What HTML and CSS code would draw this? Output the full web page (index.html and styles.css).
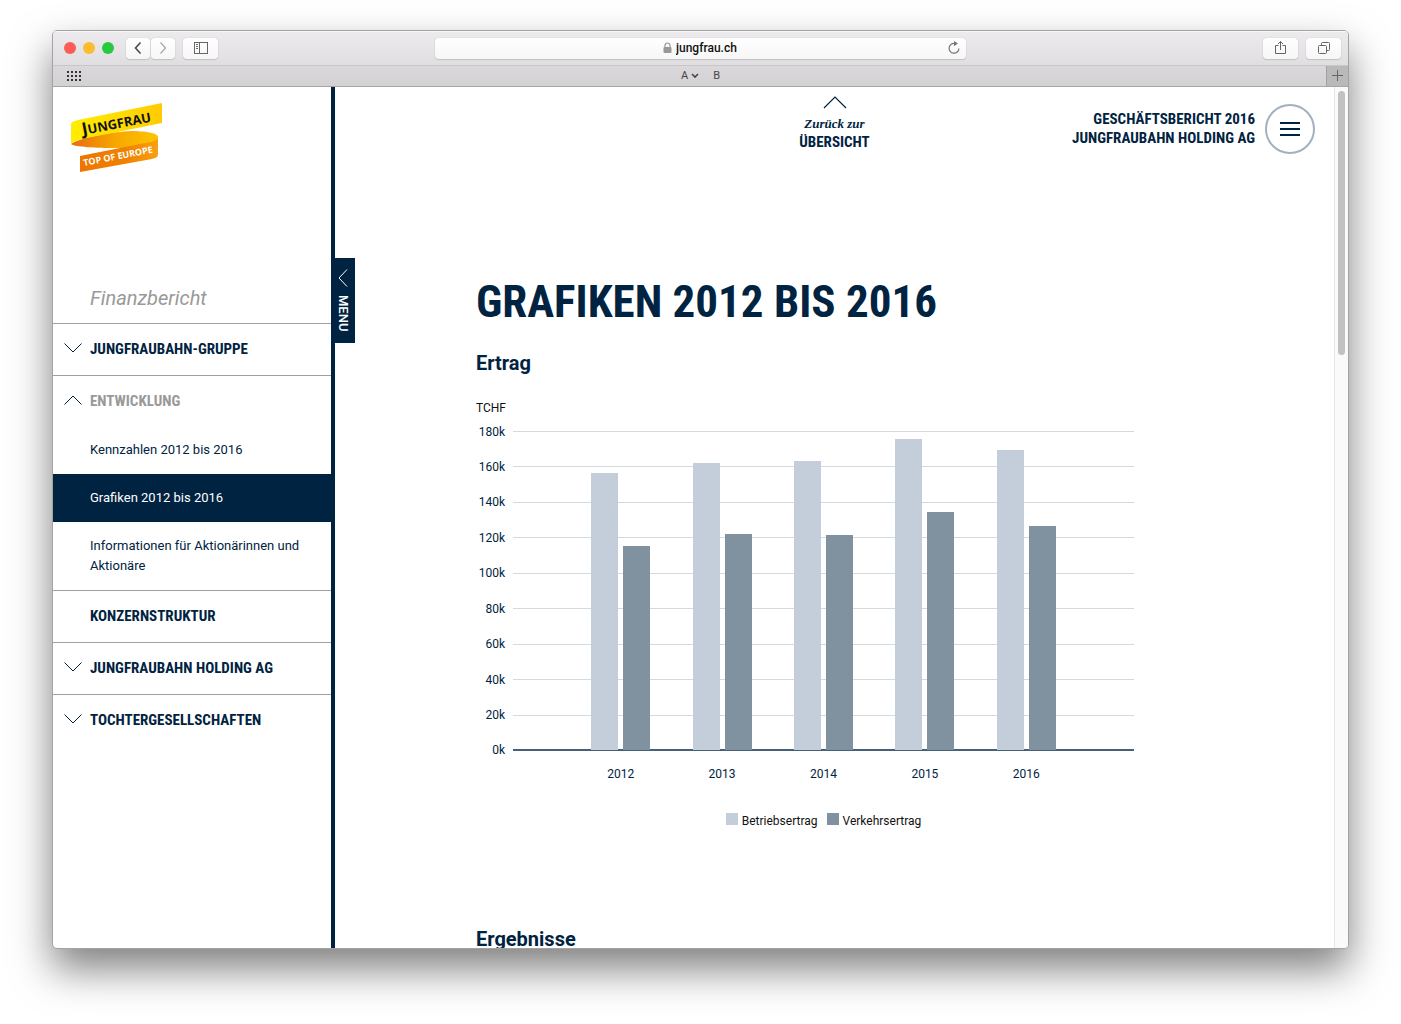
FILE: index.html
```html
<!DOCTYPE html>
<html lang="de">
<head>
<meta charset="utf-8">
<meta name="viewport" content="width=device-width, initial-scale=1">
<title>Grafiken 2012 bis 2016 – Jungfraubahn Holding AG</title>
<link rel="stylesheet" href="styles.css">
</head>
<body>
<div class="window">
  <div class="toolbar">
    <div class="toolbar-side">
      <div class="lights"><span class="light light-red"></span><span class="light light-yellow"></span><span class="light light-green"></span></div>
      <div class="history">
        <button class="tool tool-narrow" aria-label="Zurück"><svg width="12" height="16" viewBox="0 0 12 16"><path d="M8.500 2.500L3.500 8l5 5.500" stroke="#444" stroke-width="1.500"/></svg></button>
        <button class="tool tool-narrow" aria-label="Vor"><svg width="12" height="16" viewBox="0 0 12 16"><path d="M3.500 2.500L8.500 8l-5 5.500" stroke="#aaa" stroke-width="1.300"/></svg></button>
      </div>
      <button class="tool" aria-label="Seitenleiste"><svg width="16" height="14" viewBox="0 0 16 14"><rect x="1.500" y="1.500" width="13" height="11" stroke="#666"/><path d="M6.500 1.500v11M3 3.500h2M3 5.500h2M3 7.500h2" stroke="#666"/></svg></button>
    </div>
    <div class="address">
      <div class="address-text">
        <svg width="9" height="12" viewBox="0 0 9 12"><rect x="0.500" y="5" width="8" height="6" rx="1" fill="#999"/><path d="M2 5.500V3.500a2.500 2.500 0 0 1 5 0v2" stroke="#999" stroke-width="1.200"/></svg>
        <input class="address-input" type="text" value="jungfrau.ch" aria-label="Adresse">
      </div>
      <button class="reload" aria-label="Neu laden"><svg width="14" height="14" viewBox="0 0 14 14"><path d="M8 2.500A4.900 4.900 0 1 0 11.900 7.500" stroke="#777" stroke-width="1.200"/><path d="M7 0l4 2.600-4 2.600z" fill="#777"/></svg></button>
    </div>
    <div class="toolbar-side toolbar-end">
      <button class="tool" aria-label="Teilen"><svg width="14" height="16" viewBox="0 0 14 16"><path d="M4.500 5.500h-3v8h10v-8h-3M6.500 10V1.500M4 4l2.500-2.500L9 4" stroke="#666"/></svg></button>
      <button class="tool" aria-label="Alle Tabs"><svg width="14" height="14" viewBox="0 0 14 14"><rect x="1.500" y="4.500" width="8" height="8" rx="1" stroke="#666"/><path d="M4.500 4V2.500a1 1 0 0 1 1-1h6a1 1 0 0 1 1 1v6a1 1 0 0 1-1 1H10" stroke="#666"/></svg></button>
    </div>
  </div>
  <div class="favorites">
    <button class="bare" aria-label="Favoriten"><svg width="14" height="10" viewBox="0 0 14 10"><path d="M0 1h14M0 5h14M0 9h14" stroke="#333" stroke-width="2" stroke-dasharray="2 2"/></svg></button>
    <div class="bookmarks">
      <button class="bare">A <svg width="8" height="6" viewBox="0 0 8 6"><path d="M1 1l3 3 3-3" stroke="#444" stroke-width="1.600"/></svg></button>
      <button class="bare">B</button>
    </div>
    <button class="new-tab" aria-label="Neuer Tab"><svg width="12" height="12" viewBox="0 0 12 12"><path d="M5.500 0v11M0 5.500h11" stroke="#666"/></svg></button>
  </div>

  <div class="page">
    <aside class="sidebar">
      <a class="logo" href="#" aria-label="Jungfrau – Top of Europe">
        <svg width="92" height="70" viewBox="0 0 92 70">
          <defs>
            <linearGradient id="yellow"><stop offset="0" stop-color="#ffee00"/><stop offset="1" stop-color="#ffcb05"/></linearGradient>
            <linearGradient id="fold"><stop offset="0" stop-color="#e96b10"/><stop offset="0.500" stop-color="#f7a600"/><stop offset="1" stop-color="#ffc400"/></linearGradient>
            <linearGradient id="orange"><stop offset="0" stop-color="#ee7500"/><stop offset="0.600" stop-color="#f08200"/><stop offset="1" stop-color="#f9a010"/></linearGradient>
          </defs>
          <path d="M0 41C12 33 44 29 60 28c14 0 27 2 27 6 0 7-18 11-42 11C26 45 3 44 0 41z" fill="url(#fold)"/>
          <path d="M0 41V22c0-3 3-4 7-5L91 0v20L26 33C10 36 2 38 0 41z" fill="url(#yellow)"/>
          <path d="M9 53l60-12c12-2 18-3 18-7v17c0 3-2 4-6 5L9 69z" fill="url(#orange)"/>
          <text class="logo-name" transform="translate(12 32) rotate(-11)"><tspan class="logo-initial">J</tspan>UNGFRAU</text>
          <text class="logo-claim" transform="translate(13 63) rotate(-11)">TOP OF EUROPE</text>
        </svg>
      </a>
      <p class="section-name">Finanzbericht</p>
      <nav class="nav">
        <ul class="nav-list">
          <li class="nav-item"><a class="nav-link" href="#"><svg class="caret" width="18" height="10" viewBox="0 0 18 10"><path d="M0.500 0.500L9 9l8.500-8.500"/></svg>Jungfraubahn-Gruppe</a></li>
          <li class="nav-item"><a class="nav-link nav-open" href="#"><svg class="caret" width="18" height="10" viewBox="0 0 18 10"><path d="M0.500 9.500L9 1l8.500 8.500"/></svg>Entwicklung</a>
            <ul class="nav-sub">
              <li><a class="sub-link" href="#">Kennzahlen 2012 bis 2016</a></li>
              <li><a class="sub-link sub-current" href="#" aria-current="page">Grafiken 2012 bis 2016</a></li>
              <li><a class="sub-link" href="#">Informationen für Aktionärinnen und Aktionäre</a></li>
            </ul>
          </li>
          <li class="nav-item"><a class="nav-link" href="#">Konzernstruktur</a></li>
          <li class="nav-item"><a class="nav-link" href="#"><svg class="caret" width="18" height="10" viewBox="0 0 18 10"><path d="M0.500 0.500L9 9l8.500-8.500"/></svg>Jungfraubahn Holding AG</a></li>
          <li class="nav-item"><a class="nav-link" href="#"><svg class="caret" width="18" height="10" viewBox="0 0 18 10"><path d="M0.500 0.500L9 9l8.500-8.500"/></svg>Tochtergesellschaften</a></li>
        </ul>
      </nav>
      <button class="menu-tab"><svg width="10" height="18" viewBox="0 0 10 18"><path d="M9 0.500L1 9l8 8.500" stroke="#fff"/></svg>MENU</button>
    </aside>

    <main class="main">
      <header class="header">
        <a class="back" href="#"><svg width="24" height="13" viewBox="0 0 24 13"><path d="M1 12L12 1l11 11" stroke="#002341" stroke-width="1.200"/></svg><span class="back-small">Zurück zur</span><span>Übersicht</span></a>
        <div class="report">
          <p class="report-title">Geschäftsbericht 2016<br>Jungfraubahn Holding AG</p>
          <button class="burger" aria-label="Menü"><svg width="20" height="16" viewBox="0 0 20 16"><path d="M0 2h20M0 8h20M0 14h20" stroke="#002341" stroke-width="2"/></svg></button>
        </div>
      </header>
      <article class="content">
        <h1 class="title">Grafiken 2012 bis 2016</h1>
        <h2 class="subtitle">Ertrag</h2>
        <figure class="chart">
          <p class="unit">TCHF</p>
          <div class="plot">
            <ul class="scale">
              <li class="tick">180k</li><li class="tick">160k</li><li class="tick">140k</li><li class="tick">120k</li><li class="tick">100k</li><li class="tick">80k</li><li class="tick">60k</li><li class="tick">40k</li><li class="tick">20k</li><li class="tick tick-zero">0k</li>
            </ul>
            <div class="bars">
              <div class="pair"><span class="bar" style="height:86.900%"></span><span class="bar bar-dark" style="height:63.900%"></span></div>
              <div class="pair"><span class="bar" style="height:89.900%"></span><span class="bar bar-dark" style="height:67.700%"></span></div>
              <div class="pair"><span class="bar" style="height:90.500%"></span><span class="bar bar-dark" style="height:67.500%"></span></div>
              <div class="pair"><span class="bar" style="height:97.500%"></span><span class="bar bar-dark" style="height:74.500%"></span></div>
              <div class="pair"><span class="bar" style="height:94%"></span><span class="bar bar-dark" style="height:70.200%"></span></div>
            </div>
          </div>
          <div class="years"><span>2012</span><span>2013</span><span>2014</span><span>2015</span><span>2016</span></div>
          <figcaption class="legend"><span class="key">Betriebsertrag</span><span class="key key-dark">Verkehrsertrag</span></figcaption>
        </figure>
        <h2 class="subtitle">Ergebnisse</h2>
      </article>
    </main>
    <div class="scrollbar"><div class="thumb"></div></div>
  </div>
</div>
</body>
</html>
```
FILE: styles.css
```css
* { box-sizing: border-box; }

:root {
  --navy: #002341;
  --line: #a0a0a0;
  --condensed: "Roboto Condensed", "Liberation Sans Narrow", Roboto, sans-serif;
}

body {
  margin: 0;
  padding: 30px 52px 75px;
  height: 100vh;
  overflow: hidden;
  background: #fff;
  color: var(--navy);
  font: 13px/20px Roboto, sans-serif;
}

ul { list-style: none; margin: 0; padding: 0; }
p, h1, h2, figure { margin: 0; }
a { color: inherit; text-decoration: none; }
button { border: 0; padding: 0; margin: 0; font: inherit; color: inherit; }
svg { display: block; fill: none; flex: none; }

/* Browser window */
.window {
  display: flex;
  flex-direction: column;
  height: 100%;
  border: 1px solid #a3a3a3;
  border-radius: 5px;
  background: #fff;
  overflow: hidden;
  box-shadow: 0 20px 40px rgba(0, 0, 0, 0.5);
}

.toolbar {
  display: grid;
  grid-template-columns: 1fr 41% 1fr;
  align-items: center;
  height: 34px;
  flex: none;
  background: linear-gradient(#edebed, #e0dee0);
  box-shadow: inset 0 1px #f8f8f8;
}
.toolbar-side { display: flex; align-items: center; gap: 8px; padding: 0 7px 0 11px; }
.toolbar-end { justify-content: flex-end; }
.lights { display: flex; gap: 7px; margin-right: 4px; }
.light { width: 12px; height: 12px; border-radius: 50%; }
.light-red { background: #fc5b57; }
.light-yellow { background: #fdbc2e; }
.light-green { background: #28c93f; }
.history { display: flex; gap: 1px; }
.tool {
  display: flex;
  align-items: center;
  justify-content: center;
  width: 35px;
  height: 21px;
  border-radius: 4px;
  background: linear-gradient(#fff, #f6f6f6);
  box-shadow: 0 0 1px #aaa, 0 1px 1px #c4c4c4;
}
.tool-narrow { width: 24px; }

.address {
  display: grid;
  grid-template-columns: 1fr auto 1fr;
  align-items: center;
  height: 21px;
  padding: 0 5px;
  border-radius: 4px;
  background: linear-gradient(#fff, #f6f6f6);
  box-shadow: 0 0 1px #aaa, 0 1px 1px #c4c4c4;
}
.address-text { grid-column: 2; display: flex; align-items: center; gap: 4px; }
.address-input {
  width: 62px;
  height: 20px;
  padding: 0;
  border: 0;
  background: none;
  color: #111;
  font: 500 12px/20px Roboto, sans-serif;
}
.reload { justify-self: end; background: none; }

.favorites {
  display: grid;
  grid-template-columns: 1fr auto 1fr;
  align-items: center;
  height: 22px;
  flex: none;
  border-top: 1px solid #c8c6c8;
  border-bottom: 1px solid #a5a5a5;
  background: linear-gradient(#dad8da, #d3d1d3);
  color: #444;
}
.favorites > .bare { padding-left: 14px; }
.bare { display: flex; align-items: center; gap: 3px; background: none; font-size: 11px; }
.bookmarks { display: flex; gap: 14px; }
.new-tab {
  display: flex;
  align-items: center;
  justify-content: center;
  justify-self: end;
  width: 22px;
  height: 20px;
  background: #b9b9b9;
  border-left: 1px solid #a2a2a2;
}

/* Page */
.page { display: flex; flex: 1; min-height: 0; }

.sidebar {
  position: relative;
  width: 282px;
  flex: none;
  border-right: 4px solid var(--navy);
}
.logo { display: block; padding: 16px 18px 0; }
.logo-name { font: 700 13px "Open Sans", sans-serif; fill: #111; }
.logo-initial { font-size: 17px; }
.logo-claim { font: 700 9px "Open Sans", sans-serif; fill: #fff; }
.section-name {
  padding: 112px 37px 12px;
  color: #999;
  font: italic 400 20px/26px Roboto, sans-serif;
}
.nav-item { border-top: 1px solid var(--line); }
.nav-link {
  display: block;
  position: relative;
  padding: 15px 37px 16px;
  font: 700 15px/20px var(--condensed);
  text-transform: uppercase;
}
.nav-open { padding-bottom: 15px; color: #999; }
.caret { position: absolute; left: 11px; top: 19px; stroke: var(--navy); }
.sub-link { display: block; padding: 14px 24px 14px 37px; }
.sub-current { background: var(--navy); color: #fff; }

.menu-tab {
  position: absolute;
  top: 171px;
  left: 100%;
  display: flex;
  align-items: center;
  justify-content: center;
  gap: 8px;
  height: 85px;
  width: 24px;
  background: var(--navy);
  color: #fff;
  font: 500 13px/16px Roboto, sans-serif;
  writing-mode: vertical-rl;
}

.main { flex: 1; min-width: 0; overflow: hidden; }
.header {
  display: grid;
  grid-template-columns: 1fr auto 1fr;
  align-items: start;
  padding: 9px 19px 0;
  text-transform: uppercase;
  font: 700 15px/19px var(--condensed);
}
.back {
  grid-column: 2;
  display: flex;
  flex-direction: column;
  align-items: center;
  line-height: 18px;
}
.back-small {
  margin-top: 6px;
  text-transform: none;
  font: italic 700 13px/18px "Liberation Serif", serif;
}
.report {
  display: flex;
  align-items: center;
  justify-content: flex-end;
  gap: 10px;
  padding-top: 8px;
  text-align: right;
}
.burger {
  display: flex;
  align-items: center;
  justify-content: center;
  width: 50px;
  height: 50px;
  border: 2px solid #a3b0bf;
  border-radius: 50%;
  background: #fff;
}

.content { padding: 118px 200px 0 141px; }
.title { font: 700 45px/60px var(--condensed); text-transform: uppercase; }
.subtitle { margin-top: 18px; font: 700 20px/26px Roboto, sans-serif; }

.chart { padding-bottom: 77px; }
.unit { margin: 22px 0 13px; color: #111; line-height: 20px; font-size: 12px; }
.plot { display: grid; height: 320px; font-size: 12px; }
.scale {
  grid-area: 1 / 1;
  display: flex;
  flex-direction: column;
  justify-content: space-between;
}
.tick {
  display: grid;
  grid-template: 1px / 29px 1fr;
  align-items: center;
  gap: 8px;
  text-align: right;
}
.tick::after { content: ""; height: 1px; background: #d5dae1; }
.tick-zero::after { height: 2px; background: #46607a; }
.bars, .years {
  display: grid;
  grid-template-columns: repeat(5, 1fr);
  padding: 0 57px 1px;
  margin-left: 37px;
}
.bars { grid-area: 1 / 1; }
.pair { display: flex; justify-content: center; align-items: flex-end; gap: 5px; }
.bar { width: 27px; background: #c4cedb; }
.bar-dark { background: #80929f; }
.years { margin-top: 13px; text-align: center; font-size: 12px; line-height: 20px; }
.legend {
  display: flex;
  justify-content: center;
  gap: 9px;
  margin: 26px 0 0 37px;
  color: #111;
  font-size: 12px;
}
.key { display: flex; gap: 4px; line-height: 20px; }
.key::before { content: ""; width: 12px; height: 12px; margin-top: 2px; background: #c4cedb; }
.key-dark::before { background: #80929f; }

.scrollbar { width: 14px; flex: none; padding: 4px 3px; background: #fafafa; border-left: 1px solid #e8e8e8; }
.thumb { width: 7px; height: 31%; border-radius: 4px; background: #c1c1c1; }
```
